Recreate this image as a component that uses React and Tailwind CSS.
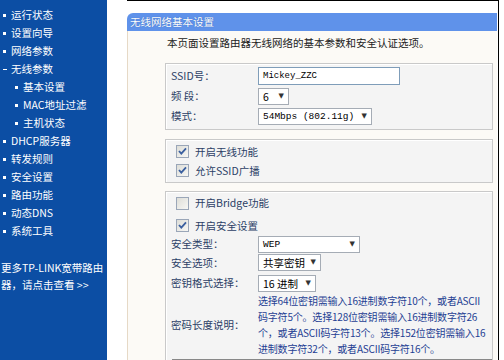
import React from "react";

const F = "font-['Noto_Sans_CJK_SC',sans-serif]";

function Dot() {
  return <span className="inline-block w-[3px] h-[3px] bg-white mr-[5px] shrink-0" />;
}

function NavItem({ text, sub, dash }) {
  return (
    <div className={`flex items-center h-[18px] text-[10.5px] leading-[18px] text-white ${sub ? "pl-[15px]" : "pl-[3px]"}`}>
      {dash ? <span className="inline-block w-[4px] h-[1px] bg-white mr-[4px] shrink-0" /> : <Dot />}
      <span>{text}</span>
    </div>
  );
}

function Check({ checked }) {
  return (
    <svg width="13" height="13" viewBox="0 0 13 13" className="shrink-0">
      <defs>
        <linearGradient id="cbg" x1="0" y1="0" x2="1" y2="1">
          <stop offset="0" stopColor="#dcdcd6" />
          <stop offset="1" stopColor="#f8f8f6" />
        </linearGradient>
      </defs>
      <rect x="0.5" y="0.5" width="12" height="12" fill="url(#cbg)" stroke="#9aa6b8" />
      {checked && (
        <path d="M3 6 L5.3 8.6 L10 3.4" fill="none" stroke="#3a5f9f" strokeWidth="1.8" />
      )}
    </svg>
  );
}

function Select({ text, w, mono }) {
  return (
    <div
      className={`flex items-center justify-between h-[17px] bg-white border border-[#a5acb5] pl-[4px] pr-[4px] leading-[15px] text-black shrink-0 ${mono ? "font-['Liberation_Mono',monospace] text-[9.5px]" : "text-[10.5px]"}`}
      style={{ width: w }}
    >
      <span className="whitespace-pre">{text}</span>
      <span className="text-[7px] text-[#333] font-['DejaVu_Sans',sans-serif]">▼</span>
    </div>
  );
}

function Row({ label, children, h = "h-[20px]" }) {
  return (
    <div className={`flex items-center ${h}`}>
      <div className="w-[92px] shrink-0 pl-[5px] text-[#2c3f66] whitespace-nowrap">{label}</div>
      {children}
    </div>
  );
}

export default function App() {
  return (
    <div className={`flex w-[504px] h-[360px] overflow-hidden bg-white ${F} text-[10.5px]`}>
      <div className="w-[107px] h-full bg-[#0c4ea4] pt-[6px] shrink-0">
        <NavItem text="运行状态" />
        <NavItem text="设置向导" />
        <NavItem text="网络参数" />
        <NavItem text="无线参数" dash />
        <NavItem text="基本设置" sub />
        <NavItem text="MAC地址过滤" sub />
        <NavItem text="主机状态" sub />
        <NavItem text="DHCP服务器" />
        <NavItem text="转发规则" />
        <NavItem text="安全设置" />
        <NavItem text="路由功能" />
        <NavItem text="动态DNS" />
        <NavItem text="系统工具" />
        <div className="mt-[19px] pl-[1px] text-white text-[10.5px] leading-[17px] whitespace-nowrap">
          <div>更多TP-LINK宽带路由</div>
          <div>器，请点击查看 &gt;&gt;</div>
        </div>
      </div>
      <div className="w-[20px] shrink-0" />
      <div className="w-[372px] h-full border-t border-r border-black pt-[12px] shrink-0">
        <div className="w-[370px] h-full flex flex-col">
          <div className="h-[18px] bg-[#5f92ea] rounded-tl-[6px] text-white text-[10.5px] leading-[18px] pl-[3px] [text-shadow:0_0_1px_#3060b0]">
            无线网络基本设置
          </div>
          <div className="flex-1 bg-[#fcfaf6] border-l border-[#e6d9c6] pl-[37px] pr-[4px]">
            <div className="h-[32px] pl-[2px] pt-[5px] leading-[14px] text-[#222]">
              本页面设置路由器无线网络的基本参数和安全认证选项。
            </div>
            <div className="bg-[#f4f4f4] border border-[#c9c9c9] shadow-[inset_1px_1px_0_#fff] pt-[2px] pb-[3px]">
              <Row label="SSID号：">
                <div className="w-[142px] h-[18px] border border-[#7f9db9] bg-white pl-[4px] font-['Liberation_Mono',monospace] text-[9px] leading-[16px] text-black">
                  Mickey_ZZC
                </div>
              </Row>
              <Row label="频 段：">
                <Select text="6" w={31} />
              </Row>
              <Row label="模式：">
                <Select text="54Mbps (802.11g)" w={114} mono />
              </Row>
            </div>
            <div className="mt-[9px] bg-[#f4f4f4] border border-[#c9c9c9] shadow-[inset_1px_1px_0_#fff] pl-[10px] pt-[2px] pb-[2px]">
              <div className="flex items-center h-[19px] gap-[6px] text-[#2c3f66]">
                <Check checked />
                <span>开启无线功能</span>
              </div>
              <div className="flex items-center h-[19px] gap-[6px] text-[#2c3f66]">
                <Check checked />
                <span>允许SSID广播</span>
              </div>
            </div>
            <div className="mt-[8px] bg-[#f4f4f4] border border-[#c9c9c9] shadow-[inset_1px_1px_0_#fff] pt-[1px]">
              <div className="pl-[10px]">
                <div className="flex items-center h-[20px] gap-[6px] text-[#2c3f66]">
                  <Check />
                  <span>开启Bridge功能</span>
                </div>
                <div className="flex items-center h-[21px] gap-[6px] mt-[2px] text-[#2c3f66]">
                  <Check checked />
                  <span>开启安全设置</span>
                </div>
              </div>
              <Row label="安全类型：" h="h-[16px]">
                <Select text="WEP" w={102} mono />
              </Row>
              <Row label="安全选项：" h="h-[21px]">
                <Select text="共享密钥" w={63} />
              </Row>
              <Row label="密钥格式选择：" h="h-[20px]">
                <Select text="16 进制" w={58} />
              </Row>
              <div className="flex items-center">
                <div className="w-[92px] shrink-0 pl-[5px] text-[#2c3f66] whitespace-nowrap">密码长度说明：</div>
                <div className="text-[#1f3f93] text-[10px] tracking-[-0.2px] leading-[16px] whitespace-nowrap">
                  <div>选择64位密钥需输入16进制数字符10个，或者ASCII</div>
                  <div>码字符5个。选择128位密钥需输入16进制数字符26</div>
                  <div>个，或者ASCII码字符13个。选择152位密钥需输入16</div>
                  <div>进制数字符32个，或者ASCII码字符16个。</div>
                </div>
              </div>
              <div className="ml-[6px] mt-[2px] grid grid-cols-[104px_114px_1fr] border-t border-l border-[#888] h-[10px]">
                <div className="border-r border-[#888]" />
                <div className="border-r border-[#888]" />
                <div />
              </div>
            </div>
          </div>
        </div>
      </div>
    </div>
  );
}
